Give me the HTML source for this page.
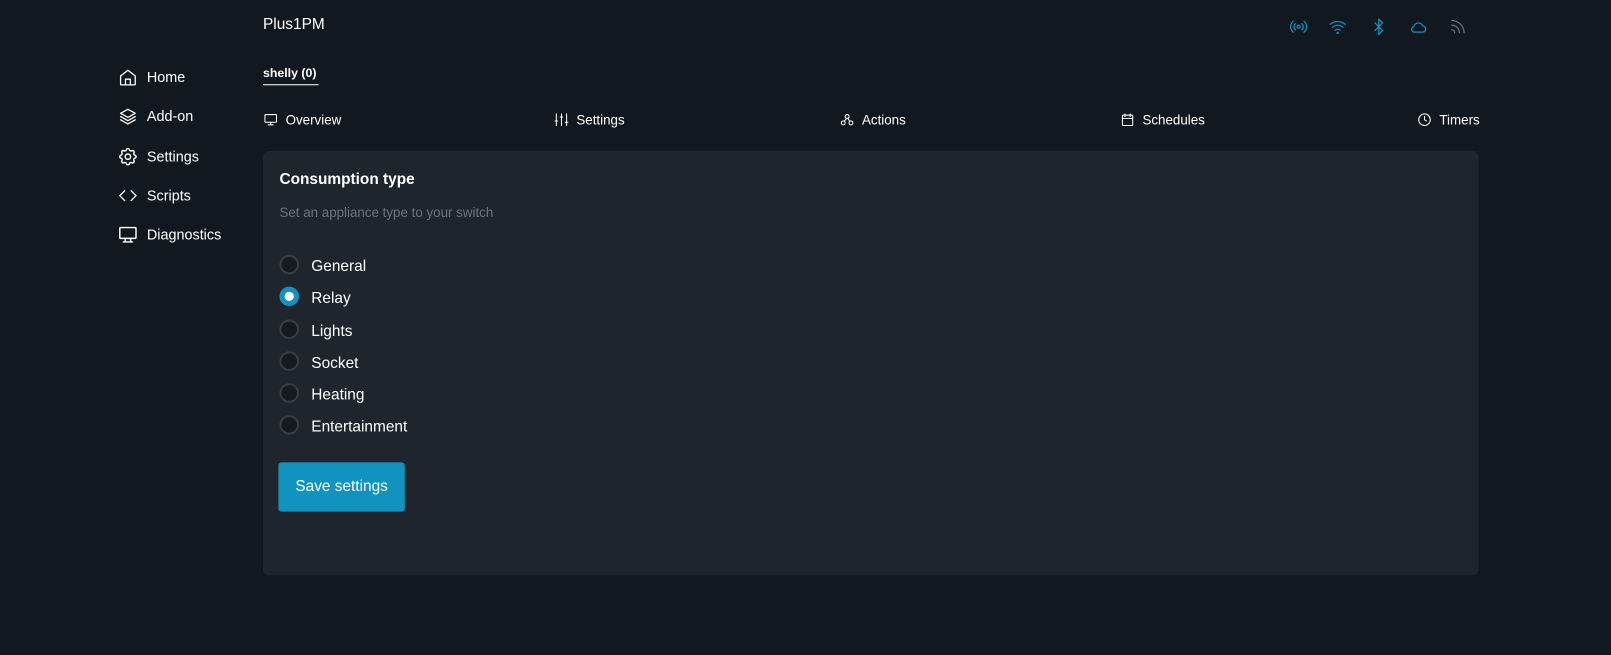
<!DOCTYPE html>
<html><head><meta charset="utf-8"><style>
*{margin:0;padding:0;box-sizing:border-box}
html,body{width:1611px;height:655px;background:#12181f;overflow:hidden}
body{font-family:"Liberation Sans",sans-serif;color:#fff;position:relative}
#w{position:absolute;left:0;top:0;width:1568px;height:638px;transform:scale(1.0274);transform-origin:0 0}
.a{position:absolute;white-space:nowrap}
svg{position:absolute;fill:none;stroke-width:1.6;stroke-linecap:round;stroke-linejoin:round}
.nav{font-size:14px}
.tab{font-size:13px}
.card{position:absolute;left:256px;top:147px;width:1183px;height:413px;background:#1f252c;border-radius:6px}
.r{position:absolute;left:272px;width:19px;height:19px;border-radius:50%;background:#141a20;border:2px solid #363d45}
.rl{position:absolute;left:303px;font-size:15px}
</style></head><body><div id="w">
<div class="a" style="left:256px;top:15px;font-size:15px">Plus1PM</div>
<div class="a" style="left:256px;top:64px;font-size:12px;font-weight:bold">shelly (0)</div>
<div class="a" style="left:256px;top:82px;width:54px;height:1px;background:#fff"></div>

<svg style="left:1255px;top:17px" width="18" height="18" viewBox="0 0 24 24" stroke="#1193c0"><circle cx="12" cy="12" r="2"/><path d="M8 8a5 5 0 0 0 0 8M16 8a5 5 0 0 1 0 8M5 5a9 9 0 0 0 0 14M19 5a9 9 0 0 1 0 14"/></svg>
<svg style="left:1293px;top:17px" width="18" height="18" viewBox="0 0 24 24" stroke="#1193c0"><path d="M2 9a15 15 0 0 1 20 0M5 13a10 10 0 0 1 14 0M8.5 16.5a5 5 0 0 1 7 0"/><circle cx="12" cy="20" r=".8"/></svg>
<svg style="left:1333px;top:17px" width="18" height="18" viewBox="0 0 24 24" stroke="#1193c0"><path d="M7 7l10 10-5 5V2l5 5L7 17"/></svg>
<svg style="left:1371px;top:17px" width="20" height="18" viewBox="0 0 24 24" stroke="#1193c0"><path d="M7 19h10a4 4 0 0 0 0-8 6 6 0 0 0-11.5 1A3.5 3.5 0 0 0 7 19z"/></svg>
<svg style="left:1410px;top:17px" width="18" height="18" viewBox="0 0 24 24" stroke="#6b7178" stroke-width="3.5"><path d="M4 4a16 16 0 0 1 16 16M4 10a10 10 0 0 1 10 10M4 16a4 4 0 0 1 4 4"/></svg>

<svg style="left:115px;top:66px" width="19" height="19" viewBox="0 0 24 24" stroke="#fff"><path d="M3 10l9-7 9 7v10a1 1 0 0 1-1 1H4a1 1 0 0 1-1-1z"/><path d="M9 21v-7h6v7"/></svg>
<div class="a nav" style="left:143px;top:67px">Home</div>
<svg style="left:115px;top:104px" width="19" height="19" viewBox="0 0 24 24" stroke="#fff"><path d="M12 3l9 5-9 5-9-5z"/><path d="M3 12l9 5 9-5M3 16l9 5 9-5"/></svg>
<div class="a nav" style="left:143px;top:105px">Add-on</div>
<svg style="left:114px;top:142px" width="21" height="21" viewBox="0 0 24 24" stroke="#fff"><circle cx="12" cy="12" r="3"/><path d="M10.3 4.3c.4-1.8 3-1.8 3.4 0a1.7 1.7 0 0 0 2.6 1.1c1.5-.9 3.3.8 2.4 2.4a1.7 1.7 0 0 0 1 2.5c1.8.4 1.8 3 0 3.4a1.7 1.7 0 0 0-1 2.6c.9 1.5-.9 3.300-2.4 2.4a1.7 1.7 0 0 0-2.6 1c-.4 1.8-3 1.8-3.4 0a1.7 1.7 0 0 0-2.6-1c-1.5.9-3.3-.9-2.4-2.4a1.7 1.7 0 0 0-1-2.6c-1.8-.4-1.8-3 0-3.4a1.7 1.7 0 0 0 1-2.5c-.9-1.6.9-3.3 2.4-2.4a1.7 1.7 0 0 0 2.6-1.100z"/></svg>
<div class="a nav" style="left:143px;top:144px">Settings</div>
<svg style="left:115px;top:181px" width="19" height="19" viewBox="0 0 24 24" stroke="#fff" stroke-width="2"><path d="M8 6l-6 6 6 6M16 6l6 6-6 6"/></svg>
<div class="a nav" style="left:143px;top:182px">Scripts</div>
<svg style="left:114px;top:218px" width="21" height="21" viewBox="0 0 24 24" stroke="#fff"><rect x="3" y="4" width="18" height="12" rx="1"/><path d="M7 20h10M9 16v4M15 16v4"/></svg>
<div class="a nav" style="left:143px;top:220px">Diagnostics</div>

<svg style="left:256px;top:109px" width="15" height="15" viewBox="0 0 24 24" stroke="#fff" stroke-width="2"><rect x="3" y="4" width="18" height="12" rx="1"/><path d="M8 20h8M12 16v4"/></svg>
<div class="a tab" style="left:278px;top:109px">Overview</div>
<svg style="left:539px;top:109px" width="15" height="15" viewBox="0 0 24 24" stroke="#fff" stroke-width="2"><path d="M4 3v18M12 3v18M20 3v18M2 14h4M10 8h4M18 16h4"/></svg>
<div class="a tab" style="left:561px;top:109px">Settings</div>
<svg style="left:817px;top:109px" width="15" height="15" viewBox="0 0 24 24" stroke="#fff" stroke-width="2"><circle cx="12" cy="7" r="3"/><circle cx="6" cy="17" r="3"/><circle cx="18" cy="17" r="3"/><path d="M11 10l-3 4M13 10l3 4"/></svg>
<div class="a tab" style="left:839px;top:109px">Actions</div>
<svg style="left:1090px;top:109px" width="15" height="15" viewBox="0 0 24 24" stroke="#fff" stroke-width="2"><rect x="4" y="5" width="16" height="16" rx="1"/><path d="M4 10h16M8 3v4M16 3v4"/></svg>
<div class="a tab" style="left:1112px;top:109px">Schedules</div>
<svg style="left:1379px;top:109px" width="15" height="15" viewBox="0 0 24 24" stroke="#fff" stroke-width="2"><circle cx="12" cy="12" r="9"/><path d="M12 7v5l3 2"/></svg>
<div class="a tab" style="left:1401px;top:109px">Timers</div>

<div class="card"></div>
<div class="a" style="left:272px;top:166px;font-size:15px;font-weight:bold">Consumption type</div>
<div class="a" style="left:272px;top:199px;font-size:13px;color:#6b7380">Set an appliance type to your switch</div>

<div class="r" style="top:248px"></div><div class="a rl" style="top:251px">General</div>
<div class="r" style="top:279px;background:#fff;border:5px solid #1193c0"></div><div class="a rl" style="top:282px">Relay</div>
<div class="r" style="top:311px"></div><div class="a rl" style="top:314px">Lights</div>
<div class="r" style="top:342px"></div><div class="a rl" style="top:345px">Socket</div>
<div class="r" style="top:373px"></div><div class="a rl" style="top:376px">Heating</div>
<div class="r" style="top:404px"></div><div class="a rl" style="top:407px">Entertainment</div>

<div class="a" style="left:271px;top:450px;width:123px;height:48px;background:#1193c0;border-radius:3px;font-size:15px;line-height:48px;text-align:center">Save settings</div>
</div></body></html>
